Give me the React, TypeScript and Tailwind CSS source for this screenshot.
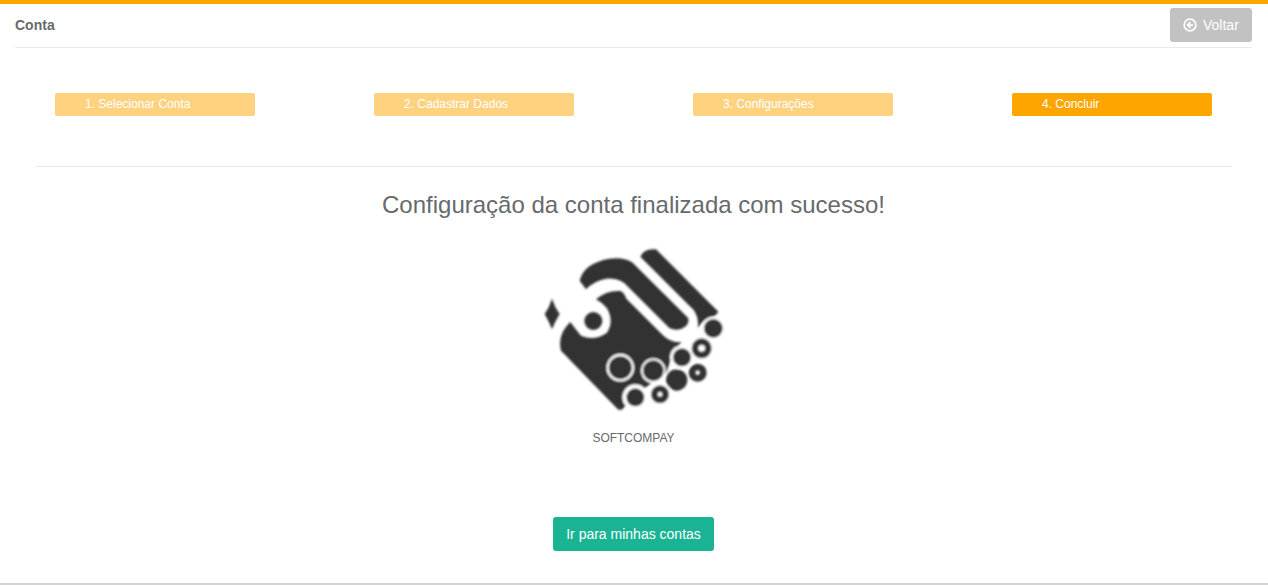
import { CircleArrowLeft } from "lucide-react";

const steps = [
  { label: "1. Selecionar Conta", active: false },
  { label: "2. Cadastrar Dados", active: false },
  { label: "3. Configurações", active: false },
  { label: "4. Concluir", active: true },
];

function Logo() {
  return (
    <svg width="200" height="175" viewBox="0 0 600 525" className="block">
      <defs>
        <filter id="soft">
          <feGaussianBlur stdDeviation="3" />
        </filter>
      </defs>
      <g filter="url(#soft)" fill="#333333">
        {/* faixa de cima */}
        <path d="M328 50 Q338 24 375 28 L562 215 L552 228 Q522 232 500 264 Q505 235 488 210 Z" />
        {/* gancho */}
        <path d="M146 122 Q158 70 235 56 Q280 50 305 68 L472 235 Q476 257 450 267 Q432 272 415 264 L288 137 Q265 112 225 116 Q190 122 165 148 Z" />
        {/* corpo */}
        <path d="M195 178 Q228 150 268 153 Q280 158 286 176 L395 285 Q420 310 452 306 L428 335 L405 400 L340 445 L272 509 L262 509 L90 332 Q78 285 118 246 Q135 270 150 287 Q190 305 228 278 Q250 245 228 205 Q215 188 195 178 Z" />
        {/* ponta esquerda */}
        <path d="M63 176 Q70 200 86 222 Q72 245 63 268 Q54 245 41 222 Q56 200 63 176 Z" />
        <circle cx="187" cy="243" r="27" />
        {/* bolinhas */}
        <circle cx="268" cy="383" r="38" stroke="#ffffff" strokeWidth="7" />
        <circle cx="367" cy="392" r="34" stroke="#ffffff" strokeWidth="6" />
        <circle cx="453" cy="352" r="36" fill="#ffffff" />
        <circle cx="453" cy="352" r="27" />
        <circle cx="547" cy="265" r="35" fill="#ffffff" />
        <circle cx="547" cy="265" r="28" />
        <circle cx="512" cy="325" r="37" fill="#ffffff" />
        <circle cx="512" cy="325" r="20" fill="none" stroke="#333333" strokeWidth="20" />
        <circle cx="437" cy="420" r="32" />
        <circle cx="500" cy="398" r="17" fill="none" stroke="#333333" strokeWidth="20" />
        <circle cx="387" cy="463" r="35" fill="#ffffff" />
        <circle cx="387" cy="463" r="17" fill="none" stroke="#333333" strokeWidth="20" />
        <circle cx="313" cy="472" r="39" fill="#ffffff" />
        <circle cx="313" cy="472" r="27" />
      </g>
    </svg>
  );
}

export default function App() {
  return (
    <div className="min-h-[585px] bg-white border-t-4 border-b-2 border-[#ffa500] border-b-[#d4d4d4] pr-[16px] pl-[15px] text-[#676a6c] font-['Liberation_Sans',Arial,sans-serif]">
      <div className="flex items-center justify-between h-[44px] border-b border-[#e7eaec]">
        <h5 className="text-[14px] font-bold">Conta</h5>
        <button className="flex items-center gap-[6px] h-[34px] w-[82px] pl-[13px] rounded-[3px] bg-[#c2c2c2] text-white text-[14px] mb-[1px]">
          <CircleArrowLeft size={14} strokeWidth={3} />
          Voltar
        </button>
      </div>

      <div className="mx-[20px] h-[119px] border-b border-[#e7eaec] pt-[45px] px-[20px] flex justify-between">
        {steps.map((step) => (
          <div
            key={step.label}
            className={
              step.active
                ? "w-[200px] h-[23px] rounded-[2px] bg-[#ffa500] pl-[30px] text-[12px] leading-[23px] text-white"
                : "w-[200px] h-[23px] rounded-[2px] bg-[#ffd27f] pl-[30px] text-[12px] leading-[23px] text-white"
            }
          >
            {step.label}
          </div>
        ))}
      </div>

      <div className="flex flex-col items-center pt-[23px]">
        <h2 className="text-[24px] leading-[30px]">Configuração da conta finalizada com sucesso!</h2>
        <div className="mt-[20px] mr-[6px]">
          <Logo />
        </div>
        <p className="mt-[15px] text-[12px] leading-[16px]">SOFTCOMPAY</p>
        <button className="mt-[71px] h-[34px] w-[161px] rounded-[3px] bg-[#1ab394] text-white text-[14px]">
          Ir para minhas contas
        </button>
      </div>
    </div>
  );
}
